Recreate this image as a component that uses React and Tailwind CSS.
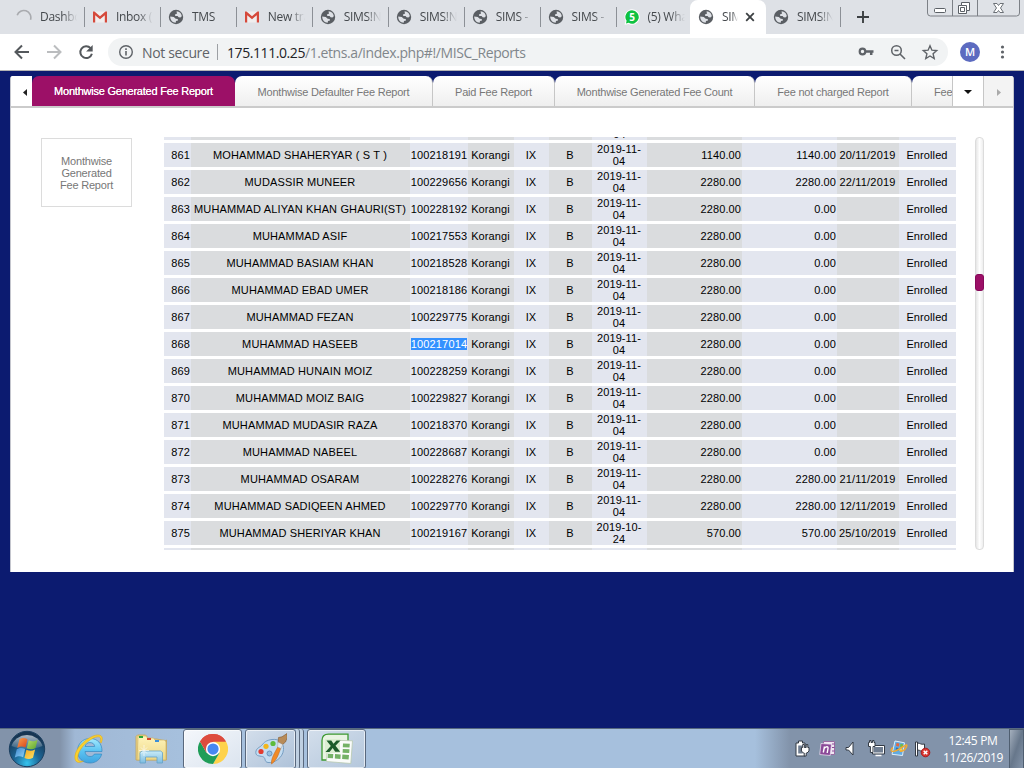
import React from 'react';

const ROWS = [
  ['861', 'MOHAMMAD SHAHERYAR ( S T )', '100218191', '2019-11-04', '1140.00', '1140.00', '20/11/2019'],
  ['862', 'MUDASSIR MUNEER', '100229656', '2019-11-04', '2280.00', '2280.00', '22/11/2019'],
  ['863', 'MUHAMMAD ALIYAN KHAN GHAURI(ST)', '100228192', '2019-11-04', '2280.00', '0.00', ''],
  ['864', 'MUHAMMAD ASIF', '100217553', '2019-11-04', '2280.00', '0.00', ''],
  ['865', 'MUHAMMAD BASIAM KHAN', '100218528', '2019-11-04', '2280.00', '0.00', ''],
  ['866', 'MUHAMMAD EBAD UMER', '100218186', '2019-11-04', '2280.00', '0.00', ''],
  ['867', 'MUHAMMAD FEZAN', '100229775', '2019-11-04', '2280.00', '0.00', ''],
  ['868', 'MUHAMMAD HASEEB', '100217014', '2019-11-04', '2280.00', '0.00', ''],
  ['869', 'MUHAMMAD HUNAIN MOIZ', '100228259', '2019-11-04', '2280.00', '0.00', ''],
  ['870', 'MUHAMMAD MOIZ BAIG', '100229827', '2019-11-04', '2280.00', '0.00', ''],
  ['871', 'MUHAMMAD MUDASIR RAZA', '100218370', '2019-11-04', '2280.00', '0.00', ''],
  ['872', 'MUHAMMAD NABEEL', '100228687', '2019-11-04', '2280.00', '0.00', ''],
  ['873', 'MUHAMMAD OSARAM', '100228276', '2019-11-04', '2280.00', '2280.00', '21/11/2019'],
  ['874', 'MUHAMMAD SADIQEEN AHMED', '100229770', '2019-11-04', '2280.00', '2280.00', '12/11/2019'],
  ['875', 'MUHAMMAD SHERIYAR KHAN', '100219167', '2019-10-24', '570.00', '570.00', '25/10/2019'],
];

const GRID = 'grid shrink-0 grid-cols-[27px_219px_58px_46px_35px_43px_55px_95px_95px_62px_57px]';
const BLUE = 'flex items-center justify-center bg-[#e3e6ef]';
const GRAY = 'flex items-center justify-center bg-[#dadcde]';

function Globe() {
  return (
    <svg className="h-4 w-4 shrink-0" viewBox="0 0 16 16">
      <circle cx="8" cy="8" r="7.2" fill="#5a5e63" />
      <path d="M8.600 2.300C11.400 2.400 13.700 4.800 13.800 7.300L12.400 8.600 10.600 8.300 9.600 7 7.300 6.900 6.900 5.400 8.900 4.700Z" fill="#dee1e6" />
      <path d="M2.200 7.500 5.800 8l1.900 1.700 2 .3.300 1.500-2 .6-.3 1.700C4.500 13.600 2.200 11 2.200 7.500Z" fill="#dee1e6" />
    </svg>
  );
}

function Gmail() {
  return (
    <svg className="h-4 w-4 shrink-0" viewBox="0 0 16 16">
      <rect x="1" y="2.500" width="14" height="11" fill="#f0eeee" />
      <path d="M1 13.500V2.500h1.500L8 7.200l5.500-4.700H15v11h-2.200V6.200L8 10.200 3.200 6.200v7.300Z" fill="#d5493b" />
    </svg>
  );
}

function Spinner() {
  return (
    <svg className="h-4 w-4 shrink-0" viewBox="0 0 16 16">
      <path d="M1 8.500a7 7 0 0 1 14 0" transform="rotate(18 8 8)" fill="none" stroke="#a9abaf" strokeWidth="1.600" />
    </svg>
  );
}

function Whats() {
  return (
    <svg className="h-4 w-4 shrink-0" viewBox="0 0 16 16">
      <path d="M8 .3a7.700 7.700 0 1 1-3.400 14.600L.6 15.800l.9-4A7.700 7.700 0 0 1 8 .3Z" fill="#fff" />
      <path d="M8 1.300a6.700 6.700 0 1 1-3.300 12.500L2 14.500l.6-2.700A6.700 6.700 0 0 1 8 1.300Z" fill="#0fc141" />
      <text x="8" y="11.500" textAnchor="middle" fontFamily="Open Sans, sans-serif" fontWeight="700" fontSize="10" fill="#fff">5</text>
    </svg>
  );
}

const TABS = [
  { icon: <Spinner />, text: 'Dashboard' },
  { icon: <Gmail />, text: 'Inbox (1)' },
  { icon: <Globe />, text: 'TMS' },
  { icon: <Gmail />, text: 'New tra' },
  { icon: <Globe />, text: 'SIMS!N' },
  { icon: <Globe />, text: 'SIMS!N' },
  { icon: <Globe />, text: 'SIMS - ' },
  { icon: <Globe />, text: 'SIMS - ' },
  { icon: <Whats />, text: '(5) What' },
];

const FADE = 'overflow-hidden whitespace-pre [mask-image:linear-gradient(to_right,black_60%,transparent)]';

function TabStrip() {
  return (
    <div className="flex h-[34px] shrink-0 items-stretch bg-[#dee1e6] font-['Open_Sans',sans-serif] text-[12px] text-[#45494d]">
      <div className="w-[9px] shrink-0" />
      {TABS.map((t, i) => (
        <div key={i} className="flex w-[75.950px] shrink-0 items-center pl-[7px]">
          {t.icon}
          <span className={`ml-2 w-[37px] tracking-[-0.3px] ${FADE}`}>{t.text}</span>
          <span className="ml-auto h-5 w-px bg-[#8c9096]" hidden={i === 8} />
        </div>
      ))}
      <div className="-ml-[2.500px] flex w-[76px] shrink-0 items-center rounded-t-[8px] bg-white pl-2">
        <Globe />
        <span className={`ml-2 w-4 tracking-[-0.3px] ${FADE}`}>SIMS</span>
        <svg className="ml-[7px] h-2.5 w-2.5" viewBox="0 0 10 10">
          <path d="m1.200 1.200 7.600 7.600M8.800 1.200 1.200 8.800" stroke="#3c4043" strokeWidth="1.800" />
        </svg>
      </div>
      <div className="flex w-[75px] shrink-0 items-center pl-[7px]">
        <Globe />
        <span className={`ml-2 w-9 tracking-[-0.3px] ${FADE}`}>SIMS!N</span>
        <span className="ml-auto h-5 w-px bg-[#8c9096]" />
      </div>
      <svg className="ml-4 mt-[11px] h-3 w-3" viewBox="0 0 12 12">
        <path d="M6 0v12M0 6h12" stroke="#3c4043" strokeWidth="1.900" />
      </svg>
      <svg className="ml-auto mr-[3px] h-[17px] w-[94px]" viewBox="0 0 94 17">
        <path d="M.5-1v14a3 3 0 0 0 3 3h86a3 3 0 0 0 3-3V-1" fill="#dfe2e7" stroke="#7c8086" />
        <path d="M25.500 0v16M50.500 0v16" stroke="#7c8086" />
        <rect x="7.500" y="8.500" width="11" height="4" rx="1" fill="#fff" stroke="#5b6066" />
        <path d="M34.500 2.500h8v8h-3v3h-8v-8h3Z" fill="#fff" stroke="#5b6066" />
        <path d="M34.500 5.500h5v5M33.500 7.500h4v4h-4Z" fill="none" stroke="#5b6066" />
        <path d="M66.500 3.500h3.500l1.500 2 1.500-2h3.500L73.500 8l3 4.500H73l-1.500-2-1.500 2h-3.500l3-4.500Z" fill="#fff" stroke="#6b7076" />
      </svg>
    </div>
  );
}

function Toolbar() {
  return (
    <div className="flex h-[37px] shrink-0 items-center border-b border-[#b4b4b4] bg-white font-['Open_Sans',sans-serif]">
      <svg className="h-9 w-[108px] shrink-0" viewBox="0 0 108 36" fill="none" strokeWidth="2">
        <path d="M29 18H16.500M22 11.500 15.500 18l6.500 6.500" stroke="#54585c" />
        <path d="M47 18h12.500M54 11.500l6.500 6.500-6.500 6.500" stroke="#bbbdbf" />
        <path d="M90.600 14.200a5.900 5.900 0 1 0 1.300 5.600" stroke="#54585c" />
        <path d="M92.700 11v6.600h-6.600Z" fill="#54585c" />
      </svg>
      <div className="flex h-7 w-[840px] shrink-0 items-center rounded-full bg-[#f1f3f4] pl-[10px] text-[14px] text-[#5f6368]">
        <svg className="h-4 w-4 shrink-0" viewBox="0 0 16 16" fill="none" stroke="#5f6368">
          <circle cx="8" cy="8" r="6.300" strokeWidth="1.400" />
          <path d="M8 7v4.500M8 4.300v1.600" strokeWidth="1.600" />
        </svg>
        <span className="ml-[8px] w-[68px] shrink-0 whitespace-nowrap tracking-[-0.35px]">Not secure</span>
        <span className="ml-[7px] h-4 w-px shrink-0 bg-[#9da0a4]" />
        <span className="ml-[9px] whitespace-nowrap tracking-[-0.42px] text-[#80868b]">
          <span className="text-[#202124]">175.111.0.25</span>/1.etns.a/index.php#!/MISC_Reports
        </span>
        <svg className="ml-auto h-7 w-[98px] shrink-0" viewBox="0 0 98 28" fill="none" stroke="#5f6368">
          <circle cx="12.500" cy="13.500" r="2.800" strokeWidth="2.200" />
          <path d="M15.500 13.500h8M21.200 13.500v3.500" strokeWidth="2.500" />
          <circle cx="46.500" cy="12.500" r="4.800" strokeWidth="1.500" />
          <path d="m50 16 5 5M44.500 12.500h4" strokeWidth="1.600" />
          <path d="m80 7.800 1.900 4.400 4.800.4-3.600 3.200 1.100 4.700L80 18l-4.200 2.500 1.100-4.700-3.600-3.200 4.800-.4Z" strokeWidth="1.400" />
        </svg>
      </div>
      <span className="ml-3 flex h-5 w-5 items-center justify-center rounded-full bg-[#5c6bc0] text-[11px] font-semibold text-white">M</span>
      <svg className="ml-[20px] h-4 w-4" viewBox="0 0 16 16" fill="#5f6368">
        <circle cx="2.500" cy="3" r="1.600" /><circle cx="2.500" cy="8" r="1.600" /><circle cx="2.500" cy="13" r="1.600" />
      </svg>
    </div>
  );
}

const RTAB = 'flex shrink-0 items-center justify-center overflow-hidden whitespace-nowrap border-r border-[#c6c6c6] bg-gradient-to-b from-white to-[#efefef] pt-0.5';

function ReportTabs() {
  return (
    <div className="flex h-8 shrink-0 border-b-2 border-[#cbcbcb] bg-white text-[11px] tracking-[-0.22px] text-[#777]">
      <div className="flex w-[21px] shrink-0 items-center justify-end bg-white pr-[5px]">
        <svg className="mt-0.5 h-[7px] w-1" viewBox="0 0 4 7"><path d="M4 0v7L0 3.500Z" fill="#222" /></svg>
      </div>
      <div className="flex min-w-0 flex-1 overflow-hidden bg-[#0c1b70]">
        <div className="flex w-[203px] shrink-0 items-center justify-center whitespace-nowrap rounded-t-[7px] bg-[#9c1067] tracking-[-0.23px] text-white [text-shadow:0_0_0.5px_white]">Monthwise Generated Fee Report</div>
        <div className={`w-[198px] rounded-t-[7px] ${RTAB}`}>Monthwise Defaulter Fee Report</div>
        <div className={`w-[122px] rounded-t-[7px] ${RTAB}`}>Paid Fee Report</div>
        <div className={`w-[200px] rounded-t-[7px] ${RTAB}`}>Monthwise Generated Fee Count</div>
        <div className={`w-[157px] rounded-t-[7px] ${RTAB}`}>Fee not charged Report</div>
        <div className="flex w-24 shrink-0 items-center whitespace-nowrap rounded-tl-[7px] bg-gradient-to-b from-white to-[#efefef] pl-[22px] pt-0.5">Fee Report</div>
      </div>
      <div className="flex w-8 shrink-0 items-center justify-center border-x border-[#c6c6c6] bg-white">
        <svg className="mt-0.5 h-1 w-[8px]" viewBox="0 0 8 4"><path d="M0 0h8L4 4Z" fill="#111" /></svg>
      </div>
      <div className="flex w-[29px] shrink-0 items-center justify-center bg-[#f3f3f3]">
        <svg className="mt-0.5 h-[7px] w-1" viewBox="0 0 4 7"><path d="M0 0v7l4-3.500Z" fill="#aaa" /></svg>
      </div>
    </div>
  );
}

function Row({ row }) {
  const [no, name, gr, date, due, paid, paidOn] = row;
  return (
    <div className={`${GRID} h-6 whitespace-nowrap`}>
      <div className={`${BLUE} !justify-end pr-[1px]`}>{no}</div>
      <div className={`${GRAY} pr-[1px] tracking-[0.14px]`}>{name}</div>
      <div className={BLUE}>
        <span className={`${gr === '100217014' ? 'bg-[#3390ff] text-white' : ''} tracking-[0.15px]`}>{gr}</span>
      </div>
      <div className={`${GRAY} pr-[1px]`}>Korangi</div>
      <div className={`${BLUE} pr-[1px]`}>IX</div>
      <div className={`${GRAY} pr-[1px]`}>B</div>
      <div className={`${BLUE} flex-col pr-[1px]`}>
        <span>{date.slice(0, 8)}</span>
        <span>{date.slice(8)}</span>
      </div>
      <div className={`${GRAY} !justify-end pr-[1px]`}>{due}</div>
      <div className={`${BLUE} !justify-end pr-[1px]`}>{paid}</div>
      <div className={`${GRAY} pr-[1px] tracking-[0.2px]`}>{paidOn}</div>
      <div className={`${BLUE} pr-[1px]`}>Enrolled</div>
    </div>
  );
}

function Strip({ text }) {
  return (
    <div className={`${GRID} overflow-hidden ${text ? 'h-[3px] grid-rows-[3px]' : 'h-[2px]'}`}>
      {[0, 1, 2, 3, 4, 5, 6, 7, 8, 9, 10].map((i) => (
        <div key={i} className={`${i % 2 ? GRAY : BLUE} ${text ? '!items-end' : ''}`}>
          {text && i === 6 ? <span>{text}</span> : null}
        </div>
      ))}
    </div>
  );
}

function Report() {
  return (
    <div className="mx-[10px] mt-[5px] flex h-[496px] w-[1004px] shrink-0 flex-col overflow-hidden rounded-t-[3px] border-x border-[#c4c6ce] bg-white">
      <ReportTabs />
      <div className="flex pl-[30px] pt-[29px]">
        <div className="mt-px flex h-[69px] w-[91px] shrink-0 items-center justify-center border border-[#dcdcdc] text-center text-[11px] leading-[12px] tracking-[-0.2px] text-[#777]">
          Monthwise<br />Generated<br />Fee Report
        </div>
        <div className="ml-8 flex h-[413px] w-[792px] shrink-0 flex-col gap-[3px] overflow-hidden text-[11px] leading-[12px] tracking-[0.1px] text-black">
          <Strip text="04" />
          {ROWS.map((r) => <Row key={r[0]} row={r} />)}
          <Strip />
        </div>
        <div className="ml-[19px] h-[413px] w-[9px] rounded-[4px] border border-[#dcdcdc] bg-gradient-to-r from-[#e6e6e6] via-white to-[#eee]">
          <div className="-ml-px mt-[136px] h-[17px] w-[9px] rounded-[3px] border border-[#86095a] bg-[#9c1067]" />
        </div>
      </div>
    </div>
  );
}

function StartOrb() {
  return (
    <svg className="h-10 w-10" viewBox="0 0 40 40">
      <defs>
        <radialGradient id="orb" cx=".5" cy=".9" r=".8">
          <stop offset="0" stopColor="#35c3ee" /><stop offset=".45" stopColor="#1d6797" /><stop offset="1" stopColor="#173552" />
        </radialGradient>
        <linearGradient id="gloss" x2="0" y2="1"><stop stopColor="#fff" stopOpacity=".65" /><stop offset="1" stopColor="#fff" stopOpacity=".1" /></linearGradient>
        <linearGradient id="flagRed" x2="1" y2="1"><stop stopColor="#f7a04b" /><stop offset="1" stopColor="#d9431d" /></linearGradient>
        <linearGradient id="flagGreen" x2="1" y2="1"><stop stopColor="#b9dc6a" /><stop offset="1" stopColor="#5aa52e" /></linearGradient>
        <linearGradient id="flagBlue" x2="1" y2="1"><stop stopColor="#3c86cf" /><stop offset="1" stopColor="#8fd3f5" /></linearGradient>
        <linearGradient id="flagYellow" x2="1" y2="1"><stop stopColor="#f5a81c" /><stop offset="1" stopColor="#fde36a" /></linearGradient>
      </defs>
      <circle cx="20" cy="20" r="17.700" fill="url(#orb)" stroke="#1b3f60" />
      <path d="M4.500 17a16 14.500 0 0 1 31 0c-9 4-22 4-31 0Z" fill="url(#gloss)" />
      <path d="M12.500 10.300c3-2 5.300-1.500 8 0l-2 8.300c-2.700-1.600-5-1.500-8.300.2Z" fill="url(#flagRed)" />
      <path d="M21.800 11.200c3 1.600 5.500 1.500 8.700-.4l-2 8.200c-3 1.800-5.500 1.700-8.700.2Z" fill="url(#flagGreen)" />
      <path d="M9.800 20.200c3-1.800 5.300-1.600 8.300-.2l-2 8.200c-2.800-1.500-5-1.400-8.300.3Z" fill="url(#flagBlue)" />
      <path d="M19.400 20.700c3 1.500 5.500 1.600 8.700-.1l-2.100 8.200c-3 1.700-5.500 1.600-8.600.2Z" fill="url(#flagYellow)" />
    </svg>
  );
}

function IE() {
  return (
    <svg className="h-8 w-8" viewBox="0 0 32 32">
      <defs><linearGradient id="ie" x2="0" y2="1"><stop stopColor="#a4e9fd" /><stop offset=".5" stopColor="#5cc4f2" /><stop offset="1" stopColor="#3fa3e0" /></linearGradient></defs>
      <path d="M29 18.500H12c.3 3.300 2.200 5 5 5 2.200 0 3.600-.8 4.400-2.400h7.300C27.200 26.500 23 30 17 30 9.500 30 4.500 25 4.500 18S9.600 5.500 17 5.500c7.600 0 12.200 5 12 13Zm-7.300-5c-.4-2.500-2-3.900-4.700-3.900s-4.300 1.400-4.900 3.900Z" fill="url(#ie)" stroke="#3788c0" strokeWidth=".7" />
      <path d="M28.200 10C31.500 2.500 27 .3 20 3 9.500 7.500.5 18 2 26c1 4.500 5.500 4 8.500 2-4 1-6-.500-5.800-3.500C5 17.500 12.500 9 20.500 5c5.500-2.400 8.500-1 6.500 4Z" fill="#fad02c" stroke="#dca51b" strokeWidth=".5" />
    </svg>
  );
}

function Folder() {
  return (
    <svg className="h-8 w-8" viewBox="0 0 32 32">
      <defs>
        <linearGradient id="fold" x2="0" y2="1"><stop stopColor="#fff4bb" /><stop offset="1" stopColor="#ecd685" /></linearGradient>
        <linearGradient id="stand" x2="0" y2="1"><stop stopColor="#c8ebf8" /><stop offset="1" stopColor="#7dbce0" /></linearGradient>
      </defs>
      <path d="M1 27V3.500L2.500 2h8l1.500 1.500V6h10l8 2 1.500-1v20Z" fill="#edd78c" stroke="#c4a557" strokeWidth=".8" />
      <path d="M3 5V3h8l1.500 2h6l1.500 2h9.500L31 9v18H2Z" fill="url(#fold)" stroke="#ceb266" strokeWidth=".7" />
      <path d="M4 4h4" stroke="#27a53b" strokeWidth="2" /><path d="M12 6h4" stroke="#d6442c" strokeWidth="2" /><path d="M20 8h4" stroke="#3c8fd8" strokeWidth="2" />
      <path d="M5 30V19.500L7 18h18.500l2 1.500V30h-5.500v-6H10.500v6Z" fill="url(#stand)" stroke="#64a2c8" strokeWidth=".8" />
      <path d="M9 12v11M4 17.500h10M6 14.500l6 6M12 14.500l-6 6" stroke="#fff" strokeWidth=".8" opacity=".8" />
    </svg>
  );
}

function Chrome() {
  return (
    <svg className="h-[30px] w-[30px]" viewBox="0 0 32 32">
      <path d="M16 16 2.140 8A16 16 0 0 1 29.860 8Z" fill="#dd4b3e" />
      <path d="M16 8h13.860A16 16 0 0 1 16 32l6.930-12Z" fill="#fed24b" />
      <path d="M9.070 20 2.140 8A16 16 0 0 0 16 32l6.930-12Z" fill="#1f9d58" />
      <path d="M16 8H29.860A16 16 0 0 0 2.140 8L9.070 20Z" fill="#dd4b3e" />
      <circle cx="16" cy="16" r="7.600" fill="#fff" /><circle cx="16" cy="16" r="6" fill="#4688f1" />
    </svg>
  );
}

function Paint() {
  return (
    <svg className="h-8 w-8" viewBox="0 0 32 32">
      <path d="M17 6.500c8-1 12 4 11.500 10C28 25 19 30.500 13 29.500c-4-.7-2-4-4.500-5.500S.8 24 .8 19.500C.8 15 5 14.500 7 12s4-4.700 10-5.500Z" fill="#c3dcf1" stroke="#6e97bd" strokeWidth=".9" />
      <circle cx="6" cy="18.500" r="2.600" fill="#e33c30" /><circle cx="11" cy="13.300" r="2.600" fill="#f3b61c" /><circle cx="18" cy="10.500" r="2.600" fill="#5dbb3d" /><circle cx="14.500" cy="20.500" r="2.500" fill="#96c0e0" stroke="#6b94bd" />
      <path d="M16.500 31c-.8-5 3.500-12 6.300-17l3 1c-2 6-4.500 13-9.300 16Z" fill="#f18b27" stroke="#bd621a" strokeWidth=".5" />
      <path d="m23 9.500.5-5L27 3.800 32 .5l.3 4L30.500 9l-3 2.500Z" fill="#b88b58" stroke="#80592f" strokeWidth=".6" />
      <path d="m23 9 4.800 2.500-1.800 4-3.500-1.500Z" fill="#e4e6e8" stroke="#8f9499" strokeWidth=".4" />
    </svg>
  );
}

function Excel() {
  return (
    <svg className="h-8 w-8" viewBox="0 0 32 32">
      <path d="M1 27V7.500C1 3.500 3.500 1.200 7.500 1.200H27V27Z" fill="#e9f4e2" stroke="#3e9a31" strokeWidth="1.300" />
      <path d="m7 7 24.500.8L29.800 30.500 5.500 28.500Z" fill="#fafcfa" stroke="#b8c9b0" strokeWidth=".8" />
      <path d="m22 10.500 6.800.3-.3 3.800-6.700-.3Zm-.2 5.500 6.700.3-.3 3.800-6.600-.3Zm-.4 5.500 6.600.4-.4 4.500-6.500-.5ZM14 21l5.700.4-.3 4.500-5.600-.4ZM7 20.800l5.300.2-.3 4.300-5.300-.4Z" fill="#74b266" />
      <path d="M4 6h15v14H4Z" fill="#dcefd2" />
      <path d="M5.500 7.500h4.800l2.200 3.200 3-3.200h4l-5 5.300 4.700 6h-5l-2.500-3.700L8.500 19h-4l5.300-6Z" fill="#1d5c2b" />
    </svg>
  );
}

function TrayIcons() {
  return (
    <svg className="h-5 w-[138px] shrink-0" viewBox="0 0 138 20">
      <g fill="#fff" stroke="#333a44" strokeWidth="1">
        <path d="M3 4h2.500V2h4v2H12v13H3Z" />
        <path d="M5.200 6.500h4.500v8H5.200Z" fill="#6f7d90" stroke="none" />
        <path d="M8.500 8.500h1.200v-3h1.600v3h1.900v-3h1.600v3H16v3.500l-2 2h-.8V17h-2v-3h-.8l-2-2Z" />
        <path d="M53 8.500h2.500l4.500-5.500v13l-4.500-5h-2.500Z" />
        <path d="M79.500 6.500h12v8.500h-12Z" /><path d="M81 8h9v5.500h-9Z" fill="#6f7d90" stroke="none" /><path d="M82.500 16.500h6" stroke="#fff" strokeWidth="1.500" />
        <path d="M75.500 3.500h1v-2h1.500v2h1.500v-2H81v2h1v4h-2v6h-2.600v-6h-1.900Z" />
        <path d="M122.500 3h2v14h-2Z" /><path d="M124.500 4c3 0 3 2 7 1v7c-4 1-4-1-7-1Z" />
      </g>
      <path d="M30.500 2.500h11v13h-11Z" fill="#efe6f2" stroke="#9a6ca3" />
      <path d="M39 5h2.500M39 8.500h2.500M39 12h2.500" stroke="#8c4b98" />
      <path d="m28 4.500 10.500.7-1.300 11.300-10.500-1Z" fill="#8b4a98" stroke="#f1e7f4" strokeWidth=".7" />
      <path d="m30.300 13.500 1.200-6m-.2 1.800c2-2.200 4-2 3.700.2l-.8 4.500" stroke="#fff" strokeWidth="1.400" fill="none" />
      <path d="m102 2 9.500 1.800-2 12.700-10.500-1.200Z" fill="#62abe2" stroke="#e0f0fb" />
      <path d="m103.500 4 2.800.5-.5 3-2.800-.5Z" fill="#e9663a" /><path d="m107.500 4.800 2.600.4-.5 3-2.600-.4Z" fill="#72bb47" /><path d="m103 8.500 2.800.5-.4 3-2.800-.5Z" fill="#2a73bd" /><path d="m106.800 9.100 2.600.4-.4 3-2.600-.4Z" fill="#f7d44d" />
      <path d="M100 8.500c-4 3.500-1 5.500 5 2.200s10-7 8.500-3-5 4.800-6.500 4.300" fill="none" stroke="#f0aa34" strokeWidth="1.600" />
      <circle cx="132.500" cy="13.500" r="4.300" fill="#d93630" stroke="#a51d20" /><path d="m130.700 11.700 3.600 3.600m0-3.600-3.600 3.600" stroke="#fff" strokeWidth="1.500" />
    </svg>
  );
}

const BTN = 'flex h-10 shrink-0 items-center justify-center rounded-[3px] border border-[#59687d] shadow-[inset_0_0_0_1px_rgba(255,255,255,0.6)]';

function Taskbar() {
  return (
    <div className="flex h-10 shrink-0 items-center border-t border-[#57697f] bg-[linear-gradient(to_right,#8293aa_0px,#8293aa_60px,#a0b8d5_75px,#a6c0dd_180px,#a6c0dd_755px,#8293aa_790px,#8293aa_100%)]">
      <div className="ml-[7px] w-10 shrink-0"><StartOrb /></div>
      <div className="ml-[26px] w-8 shrink-0"><IE /></div>
      <div className="ml-[30px] w-8 shrink-0"><Folder /></div>
      <div className={`${BTN} ml-4 w-[59px] bg-gradient-to-br from-[#f4f7fb] to-[#dbe4ef]`}><Chrome /></div>
      <div className={`${BTN} ml-[3px] w-[51px] bg-gradient-to-br from-[#d3deeb] to-[#aec2d9]`}><Paint /></div>
      <div className="h-10 w-1 shrink-0 rounded-r-[3px] border-r border-[#59687d] bg-[#bfd0e2]" />
      <div className="h-10 w-1 shrink-0 rounded-r-[3px] border-r border-[#59687d] bg-[#bfd0e2]" />
      <div className={`${BTN} ml-[3px] w-[59px] bg-gradient-to-br from-[#d3deeb] to-[#b4c7dc]`}><Excel /></div>
      <div className="ml-auto mr-[10px] flex"><TrayIcons /></div>
      <div className="w-[64px] shrink-0 whitespace-nowrap text-center font-['Open_Sans',sans-serif] text-[12px] leading-[17px] tracking-[-0.35px] text-white">
        12:45 PM<br />11/26/2019
      </div>
      <div className="ml-[4px] h-10 w-[15px] shrink-0 border border-[#4f5e70] bg-gradient-to-br from-[#a4afbd] via-[#67778b] to-[#8494a9]" />
    </div>
  );
}

export default function App() {
  return (
    <div className="flex h-[768px] w-[1024px] flex-col overflow-hidden bg-[#0c1b70] font-['Liberation_Sans',Arial,sans-serif]">
      <TabStrip />
      <Toolbar />
      <div className="flex h-[657px] shrink-0 flex-col"><Report /></div>
      <Taskbar />
    </div>
  );
}
